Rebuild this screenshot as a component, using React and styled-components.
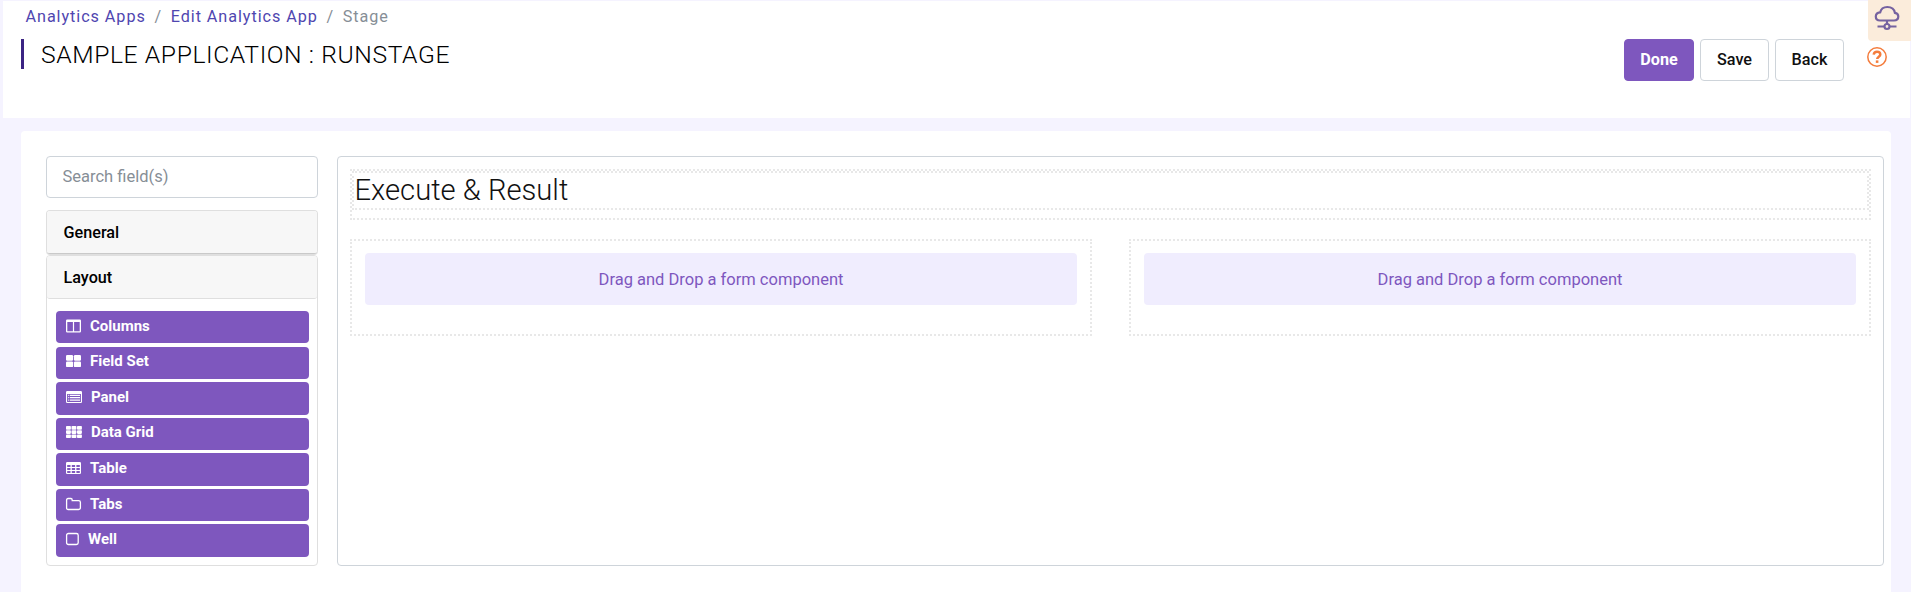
import React from "react";
import styled, { createGlobalStyle, css } from "styled-components";

const Global = createGlobalStyle`
  *, *::before, *::after { box-sizing: border-box; }
  html, body { margin: 0; height: 100%; overflow: hidden; }
  body {
    background: #f5f3ff;
    color: #212529;
    font-family: Roboto, "Liberation Sans", sans-serif;
    font-size: 16px;
    line-height: 1.5;
  }
`;

const Page = styled.div`
  height: 592px;
  display: flex;
  flex-direction: column;
  gap: 13px;
  padding: 1px 1px 0 3px;
  overflow: hidden;
`;

const Header = styled.header`
  height: 117px;
  flex: none;
  display: flex;
  justify-content: space-between;
  background: #fff;
  padding-left: 18px;
`;

const Heading = styled.div`
  display: flex;
  flex-direction: column;
`;

const Breadcrumb = styled.nav`
  display: flex;
  gap: 8.7px;
  padding: 4px 0 0 4.5px;
  height: 38px;
  font-size: 16.2px;
  letter-spacing: 0.94px;
  color: #868e96;
`;

const Crumb = styled.a`
  color: #4f46b0;
`;

const Title = styled.h1`
  margin: 0;
  height: 30px;
  padding-left: 17px;
  border-left: 3px solid #3b2483;
  font-size: 24.7px;
  font-weight: 300;
  line-height: 31px;
  letter-spacing: 0.59px;
  color: #000;
  white-space: nowrap;
`;

const Actions = styled.div`
  display: flex;
  align-items: flex-start;
  gap: 6px;
  padding: 38px 23px 0 0;
`;

const Button = styled.button`
  width: ${(p) => (p.$primary ? 70 : 69)}px;
  height: 42px;
  padding: 0 0 2px;
  border: 1px solid ${(p) => (p.$primary ? "#7e57be" : "#ced4da")};
  border-radius: 4px;
  background: ${(p) => (p.$primary ? "#7e57be" : "#fff")};
  color: ${(p) => (p.$primary ? "#fff" : "#111")};
  font: ${(p) => (p.$primary ? 700 : 500)} 16.2px Roboto, sans-serif;
`;

const Help = styled.svg`
  width: 20px;
  height: 20px;
  margin: 8px 0 0 17px;
`;

const CloudTab = styled.div`
  position: absolute;
  top: 0;
  right: 0;
  width: 43px;
  height: 41px;
  padding: 5px 0 0 6px;
  border-radius: 0 0 0 4px;
  background: #fbecdb;
  svg { display: block; }
`;

const Workspace = styled.main`
  flex: 1;
  margin: 0 19px 0 18px;
  padding: 25px 7px 26px 25px;
  display: flex;
  gap: 19px;
  border-radius: 4px 4px 0 0;
  background: #fff;
`;

const Sidebar = styled.aside`
  width: 272px;
  flex: none;
  display: flex;
  flex-direction: column;
`;

const Search = styled.input`
  width: 100%;
  height: 42px;
  margin-bottom: 12px;
  padding: 0 15.5px 2px;
  border: 1px solid #ced4da;
  border-radius: 4px;
  outline: 0;
  font: 400 16.5px Roboto, sans-serif;
  &::placeholder { color: #868e96; opacity: 1; }
`;

const Group = styled.section`
  border: 1px solid #dfdfdf;
  border-radius: 4px;
  ${(p) => p.$collapsed && css`
    height: 44px;
    margin-bottom: 1px;
    border-bottom-color: #c9c9c9;
    box-shadow: 0 1px 0 #dfdfdf;
    flex: none;
  `}
  ${(p) => !p.$collapsed && css`height: 311px;`}
`;

const GroupTitle = styled.div`
  height: ${(p) => (p.$open ? 43 : 42)}px;
  padding-left: 16.5px;
  border-radius: 3px;
  border-bottom: ${(p) => (p.$open ? "1px solid #dfdfdf" : "0")};
  background: #f7f7f7;
  font-size: 16.2px;
  font-weight: 500;
  line-height: 43px;
  color: #000;
`;

const Items = styled.div`
  display: flex;
  flex-direction: column;
  gap: 3.2px;
  padding: 12px 8px 0 9px;
`;

const Item = styled.div`
  height: 32.4px;
  display: flex;
  align-items: center;
  gap: 9px;
  padding: 0 10px 3px;
  border-radius: 4px;
  background: #7e57be;
  color: #fff;
  font-size: 15px;
  font-weight: 700;
  line-height: 20px;
`;

const Icon = styled.svg`
  width: ${(p) => p.$w}px;
  height: 14px;
  flex: none;
  overflow: visible;
`;

const Canvas = styled.section`
  flex: 1;
  display: flex;
  flex-direction: column;
  gap: 19px;
  padding: 12px;
  border: 1px solid #ced4da;
  border-radius: 4px;
`;

const Outline = styled.div`
  border: 2px dotted #e8e8e8;
`;

const ContentBlock = styled(Outline)`
  height: 51px;
  flex: none;
`;

const ContentTitle = styled(Outline)`
  height: 39px;
  padding-left: 0.5px;
  font-size: 29.2px;
  font-weight: 300;
  line-height: 34px;
  color: #111;
`;

const Columns = styled.div`
  display: grid;
  grid-template-columns: 1fr 1fr;
  gap: 37px;
`;

const Column = styled(Outline)`
  height: 97px;
  padding: 12px 13px;
`;

const DropZone = styled.div`
  height: 52px;
  border-radius: 4px;
  background: #f0edfe;
  color: #7e57be;
  text-align: center;
  font-size: 16.5px;
  line-height: 54px;
`;

const glyphs = {
  Columns: { w: 15, art: <path fillRule="evenodd" d="M1.2 .5h12.6Q15 .5 15 1.7v10.6q0 1.2-1.2 1.2H1.2Q0 13.5 0 12.3V1.7Q0 .5 1.2 .5zM1.3 3v9.3h5.6V3zM8.1 3v9.3h5.6V3z" /> },
  "Field Set": { w: 15, art: <g><rect y="1" width="7.1" height="5.7" rx="1.2" /><rect x="7.9" y="1" width="7.1" height="5.7" rx="1.2" /><rect y="7.4" width="7.1" height="5.7" rx="1.2" /><rect x="7.9" y="7.4" width="7.1" height="5.7" rx="1.2" /></g> },
  Panel: { w: 16, art: <path fillRule="evenodd" d="M1.2 1h13.6Q16 1 16 2.2v9.6q0 1.2-1.2 1.2H1.2Q0 13 0 11.8V2.2Q0 1 1.2 1zM1.1 4v8h13.8V4zM2.2 4.7h1.1v1.3h-1.1zM4 4.7h10v1.3H4zM2.2 7h1.1v1.3h-1.1zM4 7h10v1.3H4zM2.2 9.4h1.1v1.3h-1.1zM4 9.4h10v1.3H4z" /> },
  "Data Grid": { w: 16, art: <g>{[0, 1, 2].map((r) => [0, 1, 2].map((c) => <rect key={`${r}${c}`} x={c * 5.5} y={1 + r * 4.2} width="4.9" height="3.7" rx=".8" />))}</g> },
  Table: { w: 15, art: <path fillRule="evenodd" d="M1.2 1h12.6Q15 1 15 2.2v9.6q0 1.2-1.2 1.2H1.2Q0 13 0 11.8V2.2Q0 1 1.2 1zM1.2 4v2h3.3V4zM5.8 4v2h3.3V4zM10.4 4v2h3.4V4zM1.2 7v2h3.3V7zM5.8 7v2h3.3V7zM10.4 7v2h3.4V7zM1.2 10v2h3.3v-2zM5.8 10v2h3.3v-2zM10.4 10v2h3.4v-2z" /> },
  Tabs: { w: 15, art: <path fill="none" stroke="#fff" strokeWidth="1.3" d="M.6 3q0-1.5 1.5-1.5h2.8q1.3 0 1.3 1.4v.7h6.4q1.8 0 1.8 1.7v5.5q0 1.7-1.8 1.7H2.2Q.6 12.5 .6 10.9z" /> },
  Well: { w: 13, art: <rect x=".6" y="1.5" width="11.6" height="11" rx="1.8" fill="none" stroke="#fff" strokeWidth="1.3" /> },
};

export default function App() {
  return (
    <>
      <Global />
      <Page>
        <Header>
          <Heading>
            <Breadcrumb>
              <Crumb>Analytics Apps</Crumb>
              <span>/</span>
              <Crumb>Edit Analytics App</Crumb>
              <span>/</span>
              <span>Stage</span>
            </Breadcrumb>
            <Title>SAMPLE APPLICATION : RUNSTAGE</Title>
          </Heading>
          <Actions>
            <Button $primary>Done</Button>
            <Button>Save</Button>
            <Button>Back</Button>
            <Help viewBox="0 0 20 20" fill="none" stroke="#f47c3c">
              <circle cx="10" cy="10" r="9.2" strokeWidth="1.5" />
              <path d="M6.7 7.6C7 5.5 8.3 4.8 10 4.8c2 0 3.3 1.1 3.3 2.7 0 2.2-3.1 2.2-3.1 4.6" strokeWidth="2.5" />
              <path d="M10.1 13.4v2.5" strokeWidth="2.6" />
            </Help>
          </Actions>
        </Header>
        <Workspace>
          <Sidebar>
            <Search placeholder="Search field(s)" />
            <Group $collapsed>
              <GroupTitle>General</GroupTitle>
            </Group>
            <Group>
              <GroupTitle $open>Layout</GroupTitle>
              <Items>
                {Object.entries(glyphs).map(([name, { w, art }]) => (
                  <Item key={name}>
                    <Icon $w={w} viewBox={`0 0 ${w} 14`} fill="#fff">{art}</Icon>
                    {name}
                  </Item>
                ))}
              </Items>
            </Group>
          </Sidebar>
          <Canvas>
            <ContentBlock>
              <ContentTitle>Execute &amp; Result</ContentTitle>
            </ContentBlock>
            <Columns>
              <Column><DropZone>Drag and Drop a form component</DropZone></Column>
              <Column><DropZone>Drag and Drop a form component</DropZone></Column>
            </Columns>
          </Canvas>
        </Workspace>
      </Page>
      <CloudTab>
        <svg width="26" height="26" viewBox="0 0 26 26" fill="none" stroke="#7562a0" strokeWidth="2.2">
          <path d="M6 15.5h14c2.7 0 4.3-1.7 4.3-3.9 0-2.1-1.4-3.5-3.4-3.8C20.3 4.2 17.3 2 13.3 2 9.5 2 7 4 6.2 7.3 3.5 7.5 1.8 9.2 1.8 11.5c0 2.3 1.7 4 4.2 4z" />
          <path d="M13 15.5v3.5M3.5 21.5h7M15.5 21.5h7" />
          <circle cx="13" cy="21.5" r="2.5" />
        </svg>
      </CloudTab>
    </>
  );
}
